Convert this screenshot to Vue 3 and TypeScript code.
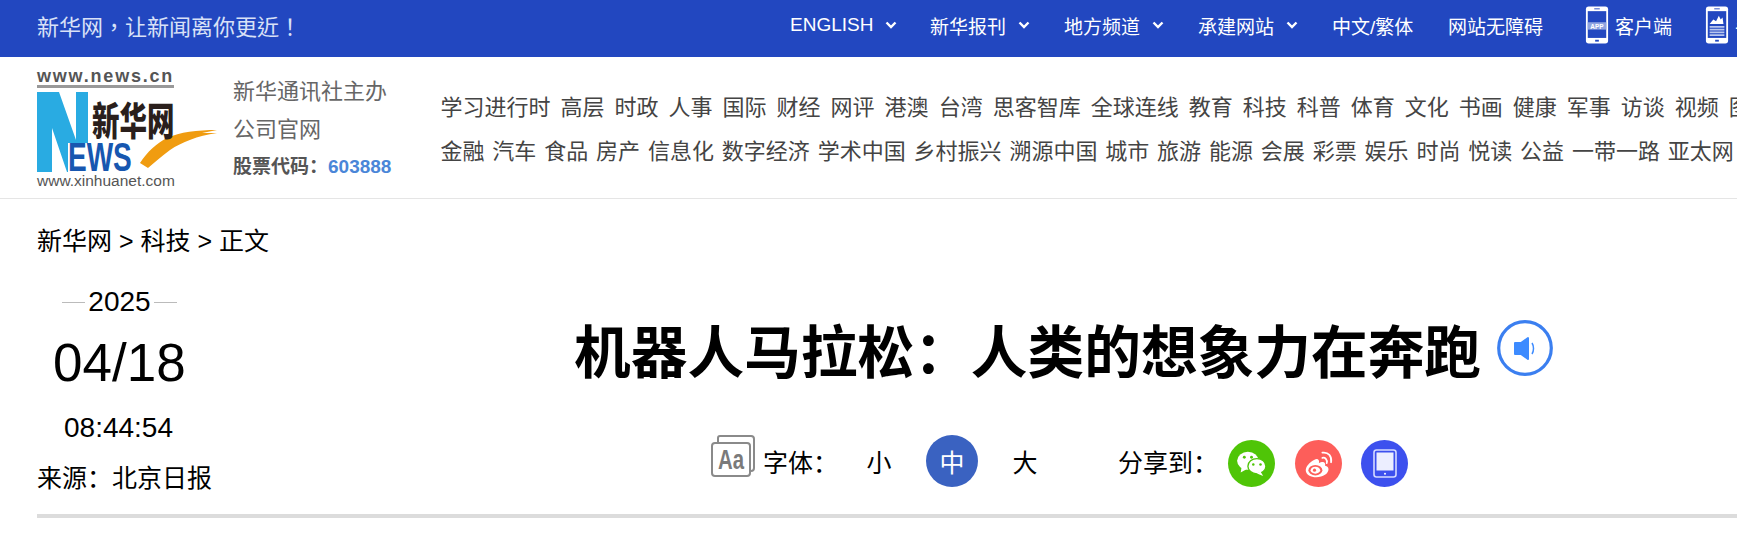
<script setup lang="ts">
const topLinks = [
  { label: 'ENGLISH', arrow: true, w: 140 },
  { label: '新华报刊', arrow: true, w: 134 },
  { label: '地方频道', arrow: true, w: 134 },
  { label: '承建网站', arrow: true, w: 134 },
  { label: '中文/繁体', arrow: false, w: 116 },
  { label: '网站无障碍', arrow: false, w: 137 },
];
const navRows = [
  ['学习进行时', '高层', '时政', '人事', '国际', '财经', '网评', '港澳', '台湾', '思客智库', '全球连线', '教育', '科技', '科普', '体育', '文化', '书画', '健康', '军事', '访谈', '视频', '图片'],
  ['金融', '汽车', '食品', '房产', '信息化', '数字经济', '学术中国', '乡村振兴', '溯源中国', '城市', '旅游', '能源', '会展', '彩票', '娱乐', '时尚', '悦读', '公益', '一带一路', '亚太网'],
];
</script>

<template>
  <div class="page">
    <header class="topbar">
      <div class="slogan">新华网，让新闻离你更近！</div>
      <nav class="top-links">
        <a v-for="link in topLinks" :key="link.label" class="top-link" :style="{ width: link.w + 'px' }">
          {{ link.label }}
          <svg v-if="link.arrow" class="chev" width="12" height="8" viewBox="0 0 12 8" fill="none" stroke="#fff" stroke-width="2.4"><path d="M1.5 1.5 6 6l4.5-4.5" /></svg>
        </a>
        <a class="app-link">
          <svg width="24" height="40" viewBox="0 0 26 42">
            <rect x="1" y="1" width="24" height="40" rx="3" fill="#fff" />
            <rect x="3" y="6" width="20" height="29" fill="#2247c0" />
            <rect x="3" y="18" width="20" height="8" fill="#8fa3e0" />
            <text x="13" y="25" font-size="7" font-weight="700" text-anchor="middle" fill="#fff" font-family="Liberation Sans">APP</text>
            <rect x="10" y="3" width="6" height="1" fill="#2247c0" />
            <rect x="11" y="37" width="4" height="2" fill="#2247c0" />
          </svg>
          客户端
        </a>
        <a class="app-link">
          <svg width="24" height="40" viewBox="0 0 26 42">
            <rect x="1" y="1" width="24" height="40" rx="3" fill="#fff" />
            <rect x="3" y="6" width="20" height="29" fill="#2247c0" />
            <path d="M5 20l4-5 3 2 3-6 2 4 2-2 1 7z" fill="#fff" />
            <path d="M5 22h16v2H5zM5 25h16v2H5zM5 28h16v2H5zM5 31h16v2H5z" fill="#b9c6ee" />
            <rect x="10" y="3" width="6" height="1" fill="#2247c0" />
            <rect x="11" y="37" width="4" height="2" fill="#2247c0" />
          </svg>
          手机版
        </a>
      </nav>
    </header>

    <section class="brand-row">
      <div class="logo">
        <div class="logo-url">www.news.cn</div>
        <div class="logo-mark">
          <svg width="180" height="80" viewBox="0 0 180 80">
            <path d="M0 0H22L39 48V0H51V51H31V80H30L15 36V80H0Z" fill="#29abe2" />
            <path d="M103 71C110 60 120 51 130 46C143 40 160 38 180 38L165 41 180 41C160 44 145 50 133 58C125 64 118 70 111 76Z" fill="#f09c10" />
          </svg>
          <span class="logo-cn">新华网</span>
          <span class="logo-ews">EWS</span>
        </div>
        <div class="logo-foot">www.xinhuanet.com</div>
      </div>
      <div class="org">
        <div class="org-line">新华通讯社主办</div>
        <div class="org-line">公司官网</div>
        <div class="stock">股票代码：<span>603888</span></div>
      </div>
      <nav class="channels">
        <div v-for="(row, i) in navRows" :key="i" class="channel-row">
          <a v-for="name in row" :key="name">{{ name }}</a>
        </div>
      </nav>
    </section>

    <main class="article">
      <div class="crumbs">新华网 &gt; 科技 &gt; 正文</div>
      <div class="head">
        <aside class="meta">
          <div class="year"><i></i>2025<i></i></div>
          <div class="day">04/18</div>
          <div class="time">08:44:54</div>
          <div class="source">来源：北京日报</div>
        </aside>
        <div class="title-box">
          <div class="title-line">
            <h1>机器人马拉松：人类的想象力在奔跑</h1>
            <svg class="sound" width="56" height="56" viewBox="0 0 56 56">
              <circle cx="28" cy="28" r="26.3" fill="none" stroke="#3b7ff0" stroke-width="3.2" />
              <path d="M18 23h6l7-5v21l-7-5h-6z" fill="#3d8bff" stroke="#3d8bff" stroke-linejoin="round" stroke-width="2" />
              <path d="M35 23c2 3 2 8 0 11" fill="none" stroke="#3d8bff" stroke-width="1.5" />
            </svg>
          </div>
          <div class="tools">
            <svg class="aa" width="44" height="42" viewBox="0 0 44 42" fill="none" stroke="#8a8a8a" stroke-width="2">
              <path d="M7 7V3a2 2 0 0 1 2-2h31a3 3 0 0 1 3 3v29a3 3 0 0 1-3 3h-1" />
              <rect x="1" y="8" width="38" height="33" rx="3" fill="#fff" />
              <text x="7" y="34" font-size="27" font-weight="700" stroke="none" fill="#7a7a7a" font-family="Liberation Sans" textLength="26" lengthAdjust="spacingAndGlyphs">Aa</text>
            </svg>
            <span class="font-label">字体：</span>
            <span class="size">小</span>
            <span class="size active">中</span>
            <span class="size">大</span>
            <span class="share-label">分享到：</span>
            <span class="share wechat">
              <svg width="31" height="27" viewBox="0 0 34 30">
                <ellipse cx="13" cy="12" rx="12" ry="10" fill="#fff" />
                <path d="M6 19l-1 6 7-4z" fill="#fff" />
                <ellipse cx="23" cy="18" rx="10" ry="8.5" fill="#fff" stroke="#4fc507" stroke-width="1.5" />
                <path d="M27 24l3 5-7-3z" fill="#fff" />
                <circle cx="9" cy="8" r="1.6" fill="#4fc507" />
                <circle cx="17" cy="8" r="1.6" fill="#4fc507" />
                <circle cx="19" cy="16" r="1.4" fill="#4fc507" />
                <circle cx="27" cy="16" r="1.4" fill="#4fc507" />
              </svg>
            </span>
            <span class="share weibo">
              <svg width="32" height="28" viewBox="0 0 34 32" fill="none">
                <path d="M13 11c-6 3-10 8-10 12 0 5 6 8 12 8 8 0 14-4 14-9 0-3-3-4-4-4 1-3-1-6-7-3 1-3-1-6-5-4z" fill="#fff" />
                <ellipse cx="14" cy="23" rx="8" ry="6" fill="#fd5e5a" />
                <ellipse cx="14" cy="23" rx="5.5" ry="4" fill="#fff" />
                <circle cx="13" cy="23" r="1.8" fill="#fd5e5a" />
                <path d="M22 9c3-1 6 2 5 6M22 3c7-1 11 4 10 11" stroke="#fff" stroke-width="2" stroke-linecap="round" />
              </svg>
            </span>
            <span class="share phone">
              <svg width="24" height="29" viewBox="0 0 24 29" fill="none">
                <rect x="1" y="1" width="22" height="27" rx="2.5" stroke="#d5daff" stroke-width="1.6" />
                <rect x="3.5" y="3.5" width="17" height="18" fill="#eceeff" />
                <circle cx="12" cy="24.8" r="1" fill="#fff" />
              </svg>
            </span>
          </div>
        </div>
      </div>
      <div class="rule"></div>
    </main>
  </div>
</template>

<style>
html, body {
  overflow: hidden;
  background: #fff;
}
</style>

<style scoped>
.page {
  width: 1737px;
  height: 544px;
  overflow: hidden;
  font-family: "Liberation Sans", "Noto Sans CJK SC", sans-serif;
  color: #000;
}
.topbar {
  height: 57px;
  box-sizing: border-box;
  background: #2247c0;
  display: flex;
  align-items: center;
  padding: 0 0 7px 37px;
  white-space: nowrap;
}
.slogan {
  width: 753px;
  flex: none;
  font-family: "Liberation Sans", "Noto Sans CJK TC", sans-serif;
  font-size: 22px;
  color: #d9e1f7;
}
.top-links {
  display: flex;
  align-items: center;
  color: #fff;
  font-size: 19px;
}
.top-link {
  flex: none;
  display: flex;
  align-items: center;
  gap: 12px;
}
.app-link {
  flex: none;
  width: 120px;
  display: flex;
  align-items: center;
  gap: 6px;
}
.brand-row {
  height: 142px;
  box-sizing: border-box;
  border-bottom: 1px solid #e5e5e5;
  display: flex;
  padding-left: 37px;
  white-space: nowrap;
}
.logo {
  width: 180px;
  flex: none;
  padding-top: 11px;
  color: #555;
}
.logo-url {
  box-sizing: content-box;
  font-size: 18px;
  font-weight: 700;
  letter-spacing: 1.8px;
  line-height: 16px;
  border-bottom: 3px solid #999;
  width: 137px;
  height: 17px;
}
.logo-mark {
  position: relative;
  height: 80px;
  margin-top: 4px;
}
.logo-mark svg {
  display: block;
}
.logo-cn {
  position: absolute;
  left: 55px;
  top: 0;
  font-size: 27.5px;
  font-weight: 900;
  color: #2a1f1c;
  line-height: 44px;
  transform: scaleY(1.4);
  transform-origin: top;
}
.logo-ews {
  position: absolute;
  left: 31px;
  top: 51px;
  font-size: 40px;
  line-height: 29px;
  font-weight: 700;
  color: #1757b0;
  transform: scaleX(0.7);
  transform-origin: left;
}
.logo-foot {
  font-size: 15.5px;
  color: #555;
  line-height: 16px;
  margin-top: 1px;
}
.org {
  margin-left: 16px;
  padding-top: 16px;
  width: 207.5px;
  flex: none;
  color: #666;
}
.org-line {
  font-size: 22px;
  line-height: 38px;
}
.stock {
  font-size: 19px;
  font-weight: 700;
  line-height: 36px;
  color: #555;
}
.stock span {
  color: #4a86d8;
}
.channels {
  padding-top: 29px;
  flex: none;
}
.channel-row {
  display: flex;
  gap: 10px;
  font-size: 22px;
  line-height: 44px;
  color: #444;
}
.channel-row + .channel-row {
  gap: 7.85px;
}
.article {
  padding-left: 37px;
}
.crumbs {
  font-size: 25px;
  line-height: 30px;
  padding-top: 27px;
}
.head {
  display: flex;
}
.meta {
  width: 180px;
  flex: none;
}
.year {
  margin-top: 31px;
  margin-left: 25px;
  width: 115px;
  display: flex;
  align-items: center;
  justify-content: space-between;
  font-size: 28px;
  line-height: 30px;
}
.year i {
  width: 23px;
  height: 1px;
  background: #bbb;
}
.day {
  font-size: 53px;
  line-height: 60px;
  margin: 16px 0 0 16px;
}
.time {
  font-size: 28px;
  line-height: 30px;
  margin: 20px 0 0 27px;
}
.source {
  font-size: 25px;
  line-height: 30px;
  margin-top: 20px;
}
.title-box {
  flex: 1;
  padding-left: 357px;
}
.title-line {
  display: flex;
  align-items: flex-start;
  margin-top: 64px;
  height: 56px;
}
h1 {
  margin: 6px 0 0;
  font-size: 56.7px;
  line-height: 56px;
  font-weight: 700;
  white-space: nowrap;
}
.sound {
  margin-left: 16px;
  flex: none;
}
.tools {
  display: flex;
  align-items: center;
  margin-top: 59px;
  margin-left: 137px;
  font-size: 25px;
  height: 52px;
  white-space: nowrap;
}
.aa {
  flex: none;
  align-self: flex-start;
}
.font-label {
  margin-left: 8px;
  width: 90px;
}
.size {
  width: 52px;
  height: 52px;
  display: flex;
  align-items: center;
  justify-content: center;
  border-radius: 50%;
}
.size + .size {
  margin-left: 21px;
}
.size.active {
  background: #3a62c1;
  color: #fff;
}
.share-label {
  margin-left: 67px;
  width: 110px;
}
.share {
  width: 47px;
  height: 47px;
  border-radius: 50%;
  display: flex;
  align-items: center;
  justify-content: center;
  margin-right: 19.5px;
  align-self: flex-start;
  margin-top: 5px;
}
.wechat {
  background: #4fc507;
}
.weibo {
  background: #fd5e5a;
}
.phone {
  background: #3d50ee;
}
.rule {
  height: 4px;
  background: #dcdcdc;
  margin-top: 21px;
}
</style>
